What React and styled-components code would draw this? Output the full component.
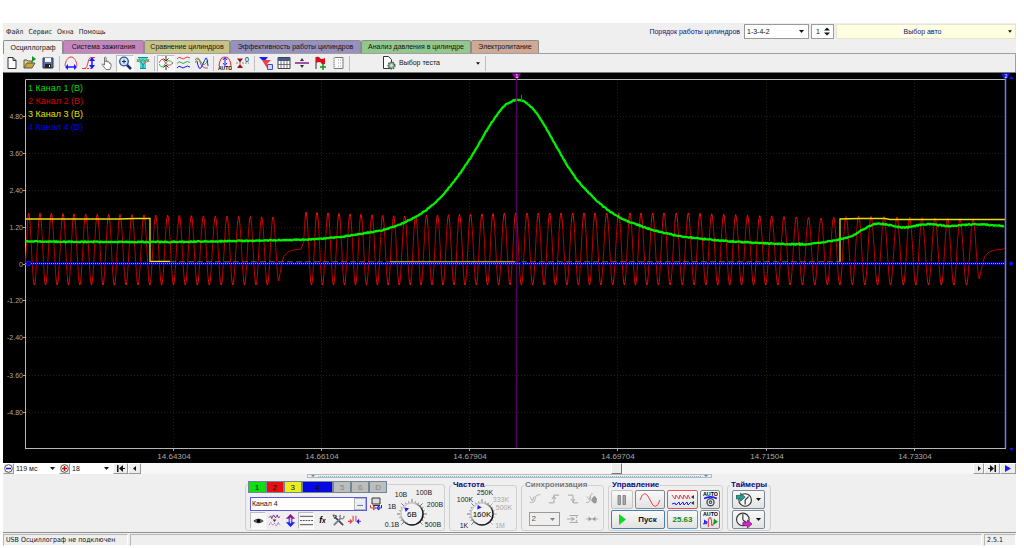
import React from "react";
import styled, { createGlobalStyle } from "styled-components";

const GlobalStyle = createGlobalStyle`
  *, *::before, *::after { box-sizing: border-box; }
  body {
    margin: 0;
    background: #fff;
    color: #111;
    font: 7px/10px "Liberation Sans", Arial, sans-serif;
  }
  button, input, select {
    font: inherit;
    color: inherit;
    margin: 0;
    border-radius: 0;
  }
  svg { display: block; flex: none; }
`;

const Page = styled.div`
  padding: 23px 8px 0 3px;
`;

const Window = styled.main`
  background: #efefef;
`;

/* ---------- menu line ---------- */

const MenuBar = styled.header`
  display: flex;
  align-items: center;
  height: 17px;
`;

const Menu = styled.nav`
  display: flex;
  gap: 5px;
  padding-left: 3px;
  margin-right: auto;
  font-family: "DejaVu Sans Condensed", "DejaVu Sans", sans-serif;
`;

const MenuLink = styled.a`
  color: #222;
  text-decoration: none;
`;

const OrderLabel = styled.label`
  color: #10107a;
  margin-right: 4px;
`;

const Combo = styled.span`
  display: grid;
  width: ${(p) => p.$w}px;
  height: ${(p) => p.$h || 15}px;
  margin-right: ${(p) => p.$gap || 0}px;
  align-items: center;
  background: ${(p) => (p.$off ? "#efefef" : "#fff")};
  border: ${(p) => (p.$flat ? "0" : "1px solid #9a9a9a")};
  color: ${(p) => (p.$off ? "#555" : "#111")};

  select, svg { grid-area: 1 / 1; }
  select {
    appearance: none;
    width: 100%;
    height: 100%;
    padding: 0 2px;
    border: 0;
    background: transparent;
  }
  svg {
    justify-self: end;
    margin-right: 4px;
    pointer-events: none;
    opacity: ${(p) => (p.$off ? 0.5 : 1)};
  }
`;

const Spinner = styled.span`
  display: flex;
  align-items: center;
  justify-content: space-between;
  width: 23px;
  height: 15px;
  margin-right: 2px;
  padding: 0 3px 0 4px;
  background: #fff;
  border: 1px solid #9a9a9a;

  input {
    width: 8px;
    padding: 0;
    border: 0;
    background: transparent;
  }
`;

const CarButton = styled.button`
  display: flex;
  align-items: center;
  width: 180px;
  height: 15px;
  padding: 0 3px 0 0;
  border: 1px solid #e6e6cf;
  background: #ffffe1;
  color: #10107a;

  span { flex: 1; }
`;

/* ---------- tabs and toolbar ---------- */

const Tabs = styled.div`
  display: flex;
  align-items: flex-end;
  height: 14px;
  border-bottom: 1px solid #a0a0a0;
`;

const Tab = styled.button`
  width: ${(p) => p.$w}px;
  height: ${(p) => (p.$active ? 14 : 13)}px;
  margin-bottom: ${(p) => (p.$active ? -1 : 0)}px;
  padding: 0;
  border: 1px solid #8c8c8c;
  border-bottom: 0;
  border-radius: 2px 2px 0 0;
  background: ${(p) => p.$bg};
  white-space: nowrap;
`;

const Toolbar = styled.div`
  display: flex;
  align-items: center;
  height: 18px;
  border-right: 1px solid #a0a0a0;
`;

const Tool = styled.button`
  display: grid;
  place-items: center;
  width: ${(p) => p.$w || 18}px;
  height: 17px;
  padding: 0;
  border: 1px solid;
  border-color: ${(p) => (p.$on ? "#bcbcbc #fff #fff #bcbcbc" : "transparent")};
  background: ${(p) => (p.$on ? "#f8f8f8" : "transparent")};
`;

const Divider = styled.i`
  width: 1px;
  height: 15px;
  margin: 0 2px;
  background: #bdbdbd;
`;

const TestButton = styled.button`
  display: flex;
  align-items: center;
  gap: 3px;
  width: 101px;
  height: 17px;
  margin-left: 30px;
  padding: 0 3px 0 0;
  border: 0;
  background: transparent;

  span { flex: 1; text-align: left; }
`;

/* ---------- scope ---------- */

const Scope = styled.svg`
  width: 100%;
  height: auto;
  background: #000;
  font-family: "Liberation Sans", Arial, sans-serif;
`;

const ScrollRow = styled.div`
  display: flex;
  align-items: center;
  height: 11px;
  background: #f7f7f7;
`;

const SmallButton = styled.button`
  display: grid;
  place-items: center;
  width: ${(p) => p.$w}px;
  height: 11px;
  padding: 0;
  border: 1px solid;
  border-color: #fff #999 #999 #fff;
  background: #ededed;
`;

const TimeSlider = styled.input`
  appearance: none;
  flex: 1;
  min-width: 0;
  height: 11px;
  background: #f7f7f7;

  &::-webkit-slider-thumb {
    appearance: none;
    width: 11px;
    height: 11px;
    border: 1px solid;
    border-color: #fff #777 #777 #fff;
    background: #ededed;
  }
`;

const Splitter = styled.div`
  display: flex;
  align-items: center;
  justify-content: space-between;
  width: 40%;
  height: 4px;
  margin: 0 auto;
  padding: 0 3px;
  border: 1px solid #b8b8b8;

  &::before, &::after {
    content: "";
    border: 2px solid transparent;
    border-top-color: #2f8fd8;
    border-bottom: 0;
  }
  span {
    flex: 1;
    margin: 0 3px;
    border-top: 1px dotted #7ab8e6;
  }
`;

/* ---------- control panel ---------- */

const Panel = styled.section`
  display: flex;
  justify-content: center;
  gap: 4px;
  height: 55px;
  padding: 3px 3px 0 0;
  border-bottom: 1px solid #8e8e8e;
`;

const Group = styled.fieldset`
  width: ${(p) => p.$w}px;
  height: 50px;
  min-width: 0;
  margin: 0;
  padding: 0 2px;
  border: 1px solid #cfcfcf;
  border-radius: 3px;

  legend {
    height: 8px;
    margin-left: 0;
    padding: 0 1px;
    color: ${(p) => (p.$off ? "#777" : "#0a0a80")};
    font-size: 8px;
    font-weight: bold;
    line-height: 8px;
    white-space: nowrap;
  }
`;

const ChannelGroup = styled.div`
  display: flex;
  width: 200px;
  height: 47px;
  margin-top: 3px;
  padding: 0 2px;
  border: 1px solid #cfcfcf;
  border-radius: 3px;
`;

const ChannelColumn = styled.div`
  width: 139px;
  margin-top: -4px;
`;

const ChannelButtons = styled.div`
  display: flex;
`;

const Channel = styled.button`
  width: ${(p) => (p.$on ? 32 : 18)}px;
  height: 12px;
  padding: 0;
  border: 1px solid #6f8797;
  background: ${(p) => p.$bg || "#bdbdbd"};
  color: ${(p) => (p.$bg ? "#111" : "#858585")};
  font-size: 8px;
  font-weight: ${(p) => (p.$on ? "bold" : "normal")};
  line-height: 9px;
`;

const NameRow = styled.div`
  display: flex;
  align-items: center;
  gap: 2px;
  margin: 4px 0 1px 2px;
`;

const NameBox = styled.span`
  display: flex;
  width: 117px;
  height: 14px;
  border: 1px solid #5b5be0;
  background: #fff;

  input {
    flex: 1;
    min-width: 0;
    padding: 0 1px;
    border: 0;
    background: transparent;
  }
  button {
    width: 12px;
    padding: 0;
    border: 1px solid #b5b5b5;
    background: #efefef;
    font-weight: bold;
    line-height: 6px;
  }
`;

const ChannelTools = styled.div`
  display: flex;
  margin-left: 2px;
`;

const SyncGrid = styled.div`
  display: grid;
  grid-template-columns: repeat(4, 19px);
  grid-template-rows: 20px;
  grid-auto-rows: 20px;
  place-items: center;
  padding-left: 1px;
`;

const SyncSource = styled.div`
  grid-column: span 2;
  font-size: 8px;
`;

const ControlGrid = styled.div`
  display: grid;
  grid-template-columns: ${(p) => p.$cols};
  gap: 1px 2px;
  margin: 1px 0 0 ${(p) => p.$left || 0}px;
`;

const Key = styled.button`
  display: flex;
  align-items: center;
  justify-content: center;
  gap: ${(p) => p.$gap || 0}px;
  grid-column: span ${(p) => p.$span || 1};
  height: 19px;
  padding: 0;
  border: 1px solid ${(p) => p.$line || "#7d8a94"};
  border-radius: 2px;
  background: linear-gradient(#f9f9f9, #e2e2e2);
  color: ${(p) => p.$color || "#111"};
  font-size: 8px;
  font-weight: bold;
`;

const StatusBar = styled.footer`
  display: flex;
  gap: 2px;
  padding-top: 1px;
  font-family: "DejaVu Sans Condensed", "DejaVu Sans", sans-serif;
`;

const StatusCell = styled.span`
  width: ${(p) => (p.$w ? `${p.$w}px` : "auto")};
  flex: ${(p) => (p.$w ? "none" : 1)};
  height: 12px;
  padding-left: 2px;
  border: 1px solid;
  border-color: #b5b5b5 #fff #fff #b5b5b5;
`;

/* ---------- drawings ---------- */

const Arrow = ({ size = 5 }) => (
  <svg width={size} height="3" viewBox="0 0 5 3">
    <path d="M0 0h5L2.5 3z" fill="#111" />
  </svg>
);

const UpDown = () => (
  <svg width="6" height="9" viewBox="0 0 6 9">
    <path d="M0 3.5L3 .5l3 3zM0 5.5h6l-3 3z" fill="#111" />
  </svg>
);

const R = "#e8404a";
const B = "#1a1aff";
const G = "#35b548";
const P = "#8a1a8a";

const shapes = {
  file: <path d="M3 1.500h5l3 3v8H3z M8 1.500v3h3" fill="#fff" stroke="#333" />,
  open: (
    <>
      <path d="M1 12V4h3l1 1h4v3" fill="#e8d26a" stroke="#555" />
      <path d="M1 12l3-5h8l-3 5z" fill="#c8a838" stroke="#555" />
      <path d="M9 0l4 3-4 3z" fill="#0c9a1c" />
    </>
  ),
  save: (
    <>
      <path d="M2 2h10v10H2z" fill="#5a6f9c" stroke="#273450" />
      <path d="M4 2h6v4H4z" fill="#f4f4f4" />
      <path d="M4 8h6v4H4z" fill="#222" />
      <path d="M8 9h1v2H8z" fill="#fff" />
    </>
  ),
  arcH: (
    <>
      <path d="M1 10C2 -2 12 -2 13 10" fill="none" stroke={R} />
      <path d="M3 11h8" stroke={B} strokeWidth="1.5" />
      <path d="M1 11l3-3v6zM13 11l-3-3v6z" fill={B} />
    </>
  ),
  arcV: (
    <>
      <path d="M0 12.500h2c5 0 3-11 7-11h4" fill="none" stroke={R} />
      <path d="M2 12.500h8" stroke={R} strokeDasharray="2 1" />
      <path d="M10 3v8" stroke={B} strokeWidth="1.5" />
      <path d="M10 1l3 4H7zM10 13l3-4H7z" fill={B} />
    </>
  ),
  hand: (
    <path
      d="M4.500 7V1.500q1-1 1.500 0V6V5q1-.8 1.700.2v1q1-.8 1.700.2v1q1.300-.6 1.600.6v2.500l-1 3H6L2 8.500q.5-1.500 2.500.5z"
      fill="#fff"
      stroke="#555"
      strokeWidth=".8"
    />
  ),
  zoom: (
    <>
      <path d="M9 9l4 4" stroke="#1c2e6a" strokeWidth="2.500" />
      <circle cx="6" cy="5.500" r="4.300" fill="#cfe6fa" stroke="#2c4c9c" strokeWidth="1.300" />
      <path d="M4 5.500h4M6 3.500v4" stroke="#1c2e6a" />
    </>
  ),
  region: (
    <>
      <path d="M2 1h10L10 6v7H4V6z" fill="#35dfe0" />
      <path d="M1 6q2-5 4 0t4 0 4 0" fill="none" stroke={R} />
      <path d="M1 3q2 5 4 2t4 0 4-2" fill="none" stroke={G} />
      <path d="M2 1.500h10M4 12.500h6M7 8v4" stroke="#1a8a8c" />
    </>
  ),
  cross: (
    <>
      <path d="M0 7q3-7 6-1t8 1" fill="none" stroke={R} />
      <path d="M0 8q3 6 6 0t8-1" fill="none" stroke={G} />
      <path d="M7 0v5M7 9v5M4.500 2.500L7 5l2.500-2.500M4.500 11.500L7 9l2.500 2.500" fill="none" stroke="#333" />
    </>
  ),
  waves: (
    <>
      <path d="M0 3q2-3 4-1t4 0 5 0" fill="none" stroke={R} />
      <path d="M0 7.500q2-3 4-1t4 0 5 0" fill="none" stroke={G} />
      <path d="M0 12q2-3 4-1t4 0 5 0" fill="none" stroke={B} />
    </>
  ),
  overlap: (
    <>
      <path d="M0 4q3-5 5 2t8 6" fill="none" stroke={R} />
      <path d="M0 7q3-7 6-1t7-2" fill="none" stroke={G} />
      <path d="M2 5q2 12 5 5t4-8 2 8" fill="none" stroke={B} />
    </>
  ),
  autoArc: (
    <>
      <path d="M1 10C2 -2 12 -2 13 10" fill="none" stroke={R} strokeWidth="1.200" />
      <path d="M7 2v6M5 4l2-2.500L9 4M5 7l2 2.500L9 7" fill="none" stroke={B} />
      <text x="7" y="14" fontSize="5" fontWeight="bold" textAnchor="middle">AUTO</text>
    </>
  ),
  zero: (
    <>
      <path d="M0 7h13" stroke="#888" strokeDasharray="2 1" />
      <path d="M4 6.500L1 2.500h6zM4 8l-3 4h6z" fill="#a01010" />
      <text x="11" y="6" fontSize="7" textAnchor="middle">0</text>
    </>
  ),
  filter: (
    <>
      <path d="M0 1h9L5 6z" fill={B} />
      <path d="M3 4h9L8 8v4L6 9z" fill={R} />
      <path d="M8.500 8.500h5v5h-5z" fill="#cfd4ff" stroke="#4450c0" />
    </>
  ),
  table: (
    <>
      <path d="M1 1.500h12v11H1z" fill="#fff" stroke="#444" />
      <path d="M1 2h12v3H1z" fill="#445a9c" />
      <path d="M4 2v11M7 2v11M10 2v11M1 8.500h12" stroke="#555" strokeWidth=".8" />
    </>
  ),
  split: (
    <>
      <path d="M0 7h14" stroke={P} strokeWidth="1.500" />
      <path d="M7 2l2 3H5zM7 12l2-3H5z" fill="#333" />
    </>
  ),
  flag: (
    <>
      <path d="M3 1v12" stroke="#333" />
      <path d="M3 1q3-1 4 1t5 0v6q-3 1-4-1t-5 0z" fill="#d8101c" />
      <path d="M10 8v6M7 11h6" stroke="#0a9a1c" strokeWidth="1.500" />
    </>
  ),
  notes: (
    <>
      <path d="M3 1.500h9v11H3z" fill="#fafafa" stroke="#777" />
      <path d="M3 1v12" stroke="#fafafa" strokeDasharray="1 1" />
      <path d="M7 4h3M7 7h3M7 10h3" stroke="#aaa" strokeDasharray="1 1" />
    </>
  ),
  test: (
    <>
      <path d="M1.500.5h5l3 3v9h-8z" fill="#fff" stroke="#333" />
      <circle cx="9.500" cy="9.500" r="3.300" fill="#8fa890" stroke="#45604a" strokeWidth="1.500" strokeDasharray="1.500 .8" />
      <circle cx="9.500" cy="9.500" r="1.200" fill="#e8efe8" />
    </>
  ),
  eye: (
    <>
      <path d="M2 7.500q5-4 10 0q-5 4-10 0z" fill="#777" stroke="#222" strokeWidth=".8" />
      <circle cx="7" cy="7.500" r="2" fill="#000" />
    </>
  ),
  noise: (
    <>
      <path d="M1 4l2-2 1 3 2-4 2 3 2-3 1 3 2-1" fill="none" stroke={P} />
      <path d="M5 6h4L7 8.500z" fill="#333" />
      <path d="M1 12l2-3 2 3 2-2 2 3 2-4 2 3" fill="none" stroke="#b050b0" strokeDasharray="2 1" />
    </>
  ),
  vertical: (
    <>
      <path d="M7 0L2 5h3v2h4V5h3z" fill={P} />
      <path d="M7 14L2 9h3V7h4v2h3z" fill={B} />
      <path d="M7 4v6" stroke="#dcd8ff" strokeWidth="1.500" />
    </>
  ),
  levels: (
    <>
      <path d="M0 2.500h14M0 11.500h14" stroke="#444" />
      <path d="M0 7h14" stroke="#444" strokeDasharray="2 1" />
    </>
  ),
  fx: (
    <text x="7" y="10" fontSize="9" fontWeight="bold" fontStyle="italic" textAnchor="middle">
      f<tspan fontSize="7">x</tspan>
    </text>
  ),
  tools: (
    <>
      <path d="M3 3l9 9" stroke="#444" strokeWidth="1.800" />
      <path d="M2 12l7-7" stroke="#6d7f90" strokeWidth="2" />
      <path d="M9 1q-2 3 1 4t3-3M1 1l4 1-2 3z" fill="none" stroke="#444" />
    </>
  ),
  pulse: (
    <>
      <path d="M0 8h4M14 8h-4M5.500 8V2M8.500 8V2" fill="none" stroke={R} strokeWidth="1.200" />
      <path d="M2 5l3 3-3 3z" fill={R} />
      <path d="M12 5L9 8l3 3z" fill={B} />
    </>
  ),
  reset: (
    <>
      <path d="M3 1h8v6H3z" fill="#ddd" stroke="#333" />
      <path d="M4 8.500h7" stroke="#333" />
      <path d="M6 11H1.500V8M7 11l-2.500-2v4z" fill="none" stroke={R} />
      <path d="M8 11h4.500V8M7.500 11l2.500-2v4z" fill="none" stroke={B} />
    </>
  ),
  syncA: <path d="M1 11h3q3 0 3-4t4-5h2M1 4l3 5 2-5" fill="none" stroke="#aaa" />,
  syncRise: <path d="M1 11.500h6v-9h6M4.500 7L7 4l2.500 3" fill="none" stroke="#999" />,
  syncFall: <path d="M1 2.500h6v9h6M4.500 7L7 10l2.500-3" fill="none" stroke="#999" />,
  syncHand: (
    <>
      <path d="M0 11q5 1 5-5t3-5M1 4l3 4 1-5" fill="none" stroke="#aaa" />
      <path d="M7 6l3-3 3 4-1 5H9L6 9z" fill="#999" />
    </>
  ),
  syncLevel: <path d="M3 3h10M3 11h10M0 7h9M5 5l3 2-3 2M11 4v2M11 10V8" fill="none" stroke="#999" />,
  syncZero: (
    <>
      <path d="M0 7h14" stroke="#aaa" />
      <path d="M6.500 7L3 4v6zM7.500 7L11 4v6z" fill="#999" />
    </>
  ),
  pause: <path d="M3 2.500h2.500v9H3zM8 2.500h2.500v9H8z" fill="#aaa" stroke="#777" strokeWidth=".8" />,
  autoGear: (
    <>
      <text x="7" y="4" fontSize="5" fontWeight="bold" textAnchor="middle">AUTO</text>
      <path d="M1 6q6-3 12 0" fill="none" stroke={B} strokeWidth="1.500" />
      <circle cx="7" cy="9.500" r="3.300" fill="#eee" stroke="#445" strokeWidth="1.200" />
      <circle cx="7" cy="9.500" r="1.200" fill="none" stroke="#445" />
    </>
  ),
  autoWave: (
    <>
      <text x="7" y="4" fontSize="5" fontWeight="bold" textAnchor="middle">AUTO</text>
      <path d="M0 11h3l1-2" fill="none" stroke={B} />
      <path d="M5 14V7q2-4 3 1v4q1 2 2-2" fill="none" stroke={R} />
      <path d="M1 7l3 2-3 2z" fill={B} />
      <path d="M10 6l4 3-4 3z" fill="#0aa01c" />
    </>
  ),
  timerIn: (
    <>
      <circle cx="8" cy="7" r="5.500" fill="#f6f6f6" stroke="#333" />
      <path d="M8 7l3-3M8 7v4" stroke="#333" />
      <path d="M0 3h4V1l4 3.500L4 8V6H0z" fill="#2a9a94" stroke="#14524e" strokeWidth=".6" />
    </>
  ),
  timerOut: (
    <>
      <circle cx="6" cy="6.500" r="5.500" fill="#f6f6f6" stroke="#333" />
      <path d="M6 7V2M6 7l3 2" stroke="#333" />
      <path d="M6 9h4V7l4 3.500L10 14v-2H6z" fill="#d828c8" stroke="#6c0a62" strokeWidth=".6" />
    </>
  ),
};

const Icon = ({ name, size = 14 }) => (
  <svg width={size} height={size} viewBox="0 0 14 14">
    {shapes[name]}
  </svg>
);

const Play = ({ d, fill = "#111" }) => (
  <svg width="8" height="7" viewBox="0 0 8 7">
    <path d={d} fill={fill} />
  </svg>
);

const Lens = ({ plus }) => (
  <svg width="9" height="9" viewBox="0 0 9 9">
    <circle cx="4.500" cy="4.500" r="3.800" fill="#fff" stroke="#555" />
    <path d={plus ? "M2 4.500h5M4.500 2v5" : "M2 4.500h5"} stroke={plus ? "#c01010" : "#1a1ab0"} strokeWidth="1.500" />
  </svg>
);

const Dial = styled.svg`
  overflow: visible;
`;

// dial with ticks from lower left round to lower right
function Knob({ w, h, cx, cy, value, labels, rim, dimTicks, pointer }) {
  const ticks = [];
  for (let a = 0; a <= 18; a++) {
    const t = ((-225 + a * 15) * Math.PI) / 180;
    const far = a % 3 === 0 ? 15 : 13;
    ticks.push(
      <line
        key={a}
        x1={cx + 11 * Math.cos(t)}
        y1={cy + 11 * Math.sin(t)}
        x2={cx + far * Math.cos(t)}
        y2={cy + far * Math.sin(t)}
        stroke={dimTicks && a > 11 ? "#aaa" : "#777"}
      />
    );
  }
  const pt = (pointer * Math.PI) / 180;
  return (
    <Dial width={w} height={h} viewBox={`0 0 ${w} ${h}`}>
      <defs>
        <linearGradient id={rim} x1="0" y1="0" x2="1" y2="1">
          <stop offset=".3" stopColor="#ccc" />
          <stop offset=".7" stopColor="#111" />
        </linearGradient>
      </defs>
      {ticks}
      <circle cx={cx} cy={cy} r="11" fill="#f2f2f2" stroke={`url(#${rim})`} strokeWidth="1.500" />
      <g transform={`translate(${cx + 8 * Math.cos(pt)} ${cy + 8 * Math.sin(pt)}) rotate(${pointer})`}>
        <path d="M2 0l-4-2.500v5z" fill={B} />
      </g>
      <text x={cx} y={cy + 3} fontSize="8" textAnchor="middle">{value}</text>
      {labels.map(([x, y, text, dim]) => (
        <text key={text} x={x} y={y} fontSize="7" textAnchor="middle" fill={dim ? "#aaa" : "#222"}>
          {text}
        </text>
      ))}
    </Dial>
  );
}

/* ---------- traces ---------- */

const red1 = [28.7, 40, 51.3, 63, 74, 85.7, 97.3, 108.7, 120, 132, 144, 155.7, 167.7, 179.3, 191.3, 203.3, 215.3, 227, 238.7, 250.3, 261.7, 273];
const red2 = [
  306, 317, 328, 339, 350, 361, 372, 382.7, 393.7, 404.7, 415.7, 426.5, 437.5, 448.5, 459.5, 470.5, 482, 493, 504.3, 515.7,
  527, 538.3, 549.7, 561, 572.7, 584, 595, 606.7, 618.7, 630, 641, 652.7, 664, 676.3, 688.3, 700, 711.7, 723.7, 735.7,
  747.5, 759.7, 771.7, 784, 796.3, 808.5, 821, 833.7, 846, 858.7, 871, 884, 897, 909.7, 922, 935, 947.7, 960, 973,
];
const envelope = [[25, 213], [273, 217], [306, 212], [400, 216], [510, 213], [690, 213], [821, 218], [860, 216], [1005, 220]];

const green = [
  [25, 241.5], [150, 242], [240, 241], [285, 240], [307, 239.5], [339, 237], [360, 234], [390, 228], [415.7, 216.7],
  [431.7, 205.5], [448.3, 188.7], [470, 158.7], [486.7, 130.5], [496.7, 115.5], [506.7, 104], [516.7, 100], [522.7, 101],
  [533.3, 109.3], [545, 126.3], [560, 153], [573.3, 174.7], [586.7, 190.5], [600, 203.7], [618.7, 217], [640, 225.7],
  [656.7, 231], [680, 236], [700, 238.7], [730, 241.3], [766.7, 243.3], [800, 244.3], [820, 242.7], [840, 239.3],
  [850, 236.7], [861.7, 230.3], [873.3, 224.5], [883, 224], [903, 227.5], [926.7, 224.3], [950, 226], [973, 224.3], [1005, 226],
];

function lerp(points, x) {
  let i = 0;
  while (i < points.length - 2 && points[i + 1][0] < x) i++;
  const [a, b] = [points[i], points[i + 1]];
  return a[1] + ((b[1] - a[1]) * (x - a[0])) / (b[0] - a[0]);
}

function swing(peaks, start, lastTrough) {
  const keys = [start];
  peaks.forEach((x, i) => {
    keys.push([x, lerp(envelope, x)]);
    if (i < peaks.length - 1) keys.push([(x + peaks[i + 1]) / 2, 285]);
  });
  keys.push(lastTrough);
  let d = "";
  for (let i = 0; i < keys.length - 1; i++) {
    const [x0, y0] = keys[i];
    const [x1, y1] = keys[i + 1];
    for (let s = 0; s < 8; s++) {
      const k = (1 - Math.cos((Math.PI * s) / 8)) / 2;
      d += `L${(x0 + ((x1 - x0) * s) / 8).toFixed(1)} ${(y0 + (y1 - y0) * k).toFixed(1)}`;
    }
  }
  return d + `L${lastTrough.join(" ")}`;
}

// repeatable pseudo noise in -0.5..0.5
function grain(x) {
  const v = Math.sin(x * 127.1) * 43758.5453;
  return v - Math.floor(v) - 0.5;
}

function smooth(points) {
  let d = "";
  for (let i = 0; i < points.length - 1; i++) {
    const p0 = points[Math.max(i - 1, 0)];
    const p1 = points[i];
    const p2 = points[i + 1];
    const p3 = points[Math.min(i + 2, points.length - 1)];
    const w = p2[0] - p1[0];
    const m1 = ((p2[1] - p0[1]) / (p2[0] - p0[0])) * w;
    const m2 = ((p3[1] - p1[1]) / (p3[0] - p1[0])) * w;
    for (let x = p1[0]; x < p2[0]; x += 1) {
      const t = (x - p1[0]) / w;
      const y =
        (2 * t ** 3 - 3 * t ** 2 + 1) * p1[1] +
        (t ** 3 - 2 * t ** 2 + t) * m1 +
        (3 * t ** 2 - 2 * t ** 3) * p2[1] +
        (t ** 3 - t ** 2) * m2;
      d += `${d ? "L" : "M"}${x.toFixed(1)} ${(y + grain(x)).toFixed(1)}`;
    }
  }
  return d;
}

const redPath =
  "M25 263" +
  swing(red1, [25, 263], [278.7, 281]) +
  "L282 262L284 256L288 252L293 250L301 249L303 244" +
  swing(red2, [303, 244], [979.3, 279]) +
  "L983 262L985 256L989 252L995 250L1002 249.500L1005 248";

const voltage = [
  [116, "4.80"], [153, "3.60"], [190, "2.40"], [227, "1.20"], [264, "0"],
  [300, "-1.20"], [337, "-2.40"], [375, "-3.60"], [412, "-4.80"],
];
const times = [
  [174, "14.64304"], [322, "14.66104"], [470, "14.67904"], [618, "14.69704"], [767, "14.71504"], [915, "14.73304"],
];
const legend = [
  ["1 Канал 1 (В)", "#00d800"],
  ["2 Канал 2 (В)", "#d80000"],
  ["3 Канал 3 (В)", "#e0e000"],
  ["4 Канал 4 (В)", "#0000e8"],
];

function ScopeView() {
  return (
    <Scope viewBox="3 72 1013 391" role="img" aria-label="Осциллограмма">
      <defs>
        <linearGradient id="redFade" gradientUnits="userSpaceOnUse" x1="0" y1="213" x2="0" y2="286">
          <stop offset="0" stopColor="#ff1010" />
          <stop offset=".2" stopColor="#b80000" />
          <stop offset=".85" stopColor="#b80000" />
          <stop offset="1" stopColor="#ff1010" />
        </linearGradient>
      </defs>
      <path d="M3 72.500H1016" stroke="#777" />
      <g stroke="#20200c" strokeDasharray="1 2">
        {voltage.map(([y]) => <path key={y} d={`M26 ${y + 0.5}H1005`} />)}
        {times.map(([x]) => <path key={x} d={`M${x - 0.5} 80V448`} />)}
      </g>
      <path d="M25.500 448V79.500H1005M25 448.500H1006" fill="none" stroke="#b8b8b8" />
      <g fill="#a8a8a8" stroke="none">
        {voltage.map(([y, t]) => (
          <React.Fragment key={t}>
            <text x="23" y={y + 3} fontSize="7" textAnchor="end">{t}</text>
            <path d={`M23 ${y}h2v1h-2z`} />
          </React.Fragment>
        ))}
        {times.map(([x, t]) => (
          <React.Fragment key={t}>
            <text x={x} y="459" fontSize="8" textAnchor="middle">{t}</text>
            <path d={`M${x - 1} 449h1v2h-1z`} />
          </React.Fragment>
        ))}
      </g>
      <path d={redPath} fill="none" stroke="url(#redFade)" strokeWidth="1" />
      <path d="M25 219H120L135 218.500H150V261.500H170M390 262H515M840 262V219L860 218.500H885L890 219.500H1005" fill="none" stroke="#e8e000" strokeWidth="1.300" />
      <path d="M170 262H840" stroke="#9c9430" strokeDasharray="6 3" />
      <path d="M25 263.500H1005" stroke="#0000f0" strokeWidth="2.500" />
      <path d="M25 263.500H1005" stroke="#a8b0ff" strokeDasharray="1 1" />
      <path d={smooth(green)} fill="none" stroke="#00f000" strokeWidth="2.300" />
      <path d="M521.500 95v7" stroke="#00a000" />
      <path d="M521.500 240v32" stroke="#0000b0" />
      <path d="M516.500 79V448" stroke="#64006c" strokeWidth="1.500" opacity=".8" />
      <path d="M512 73.500h9l-3 5h-3z" fill="#a000a8" />
      <path d="M1005.500 77V448" stroke="#7474f4" strokeWidth="1.500" />
      <path d="M1001 73.500h9l-3 5h-3z" fill="#1010ff" />
      <text x="517" y="78" fontSize="5" textAnchor="middle" fill="#fff">1</text>
      <text x="1006" y="78" fontSize="5" textAnchor="middle" fill="#fff">2</text>
      <path d="M1009 79l2-3 3 3zM1009 263.500l2-2.500 3 2.500-3 2.500zM1009 448h5l-2.500 3z" fill="#1010ff" />
      <circle cx="28.500" cy="263.500" r="2" fill="#000" stroke="#1010ff" strokeWidth="1.500" />
      {legend.map(([t, color], i) => (
        <text key={t} x="28" y={91 + i * 13} fontSize="9" fill={color}>{t}</text>
      ))}
    </Scope>
  );
}

const tabs = [
  ["Осциллограф", 60, "#efefef"],
  ["Система зажигания", 81, "#c487bd"],
  ["Сравнение цилиндров", 86, "#c6c284"],
  ["Эффективность работы цилиндров", 131, "#9791c0"],
  ["Анализ давления в цилиндре", 110, "#92c78e"],
  ["Электропитание", 68, "#cfa996"],
];

// "|" is a divider, a trailing "*" marks a pressed button
const tools = [
  ["file", "Новый"], ["open", "Открыть"], ["save", "Сохранить"], "|",
  ["arcH", "Ширина"], ["arcV", "Высота"], ["hand", "Сдвиг"], ["zoom*", "Лупа"], ["region", "Область"], "|",
  ["cross*", "Совместить"], ["waves", "Разделить"], ["overlap", "Наложить"], "|",
  ["autoArc", "Авто"], ["zero", "Ноль"], "|",
  ["filter", "Фильтр"], ["table", "Таблица"], ["split", "Линейка"], ["flag", "Метка"], ["notes", "Заметки"], "|",
];

const channels = [
  ["1", "#10e010"], ["2", "#e81010"], ["3", "#ecec20"], ["4", "#0808e0"], ["5"], ["6"], ["D"],
];

const voltLabels = [
  [5, 42, "0.1В"], [5, 24, "1В"], [14, 12, "10В"], [37, 10, "100В"], [48, 22, "200В"], [46, 42, "500В"],
];
const freqLabels = [
  [12, 39, "1K"], [13, 13, "100K"], [33, 6, "250K"], [49, 13, "333K", true], [52, 21, "500K", true], [48, 39, "1M", true],
];

export default function App() {
  return (
    <Page>
      <GlobalStyle />
      <Window>
        <MenuBar>
          <Menu>
            {["Файл", "Сервис", "Окна", "Помощь"].map((m) => (
              <MenuLink key={m} href="#">{m}</MenuLink>
            ))}
          </Menu>
          <OrderLabel htmlFor="order">Порядок работы цилиндров</OrderLabel>
          <Combo $w={65} $gap={2}>
            <select id="order"><option>1-3-4-2</option></select>
            <Arrow />
          </Combo>
          <Spinner>
            <input aria-label="Цилиндр" defaultValue="1" />
            <UpDown />
          </Spinner>
          <CarButton>
            <span>Выбор авто</span>
            <Arrow size={4} />
          </CarButton>
        </MenuBar>

        <Tabs role="tablist">
          {tabs.map(([name, w, bg], i) => (
            <Tab key={name} role="tab" $w={w} $bg={bg} $active={i === 0}>{name}</Tab>
          ))}
        </Tabs>

        <Toolbar>
          {tools.map((t, i) =>
            t === "|" ? (
              <Divider key={i} />
            ) : (
              <Tool key={t[0]} aria-label={t[1]} $on={t[0].endsWith("*")}>
                <Icon name={t[0].replace("*", "")} />
              </Tool>
            )
          )}
          <TestButton>
            <Icon name="test" />
            <span>Выбор теста</span>
            <Arrow size={4} />
          </TestButton>
          <Divider />
        </Toolbar>

        <ScopeView />

        <ScrollRow>
          <SmallButton $w={11} aria-label="Уменьшить"><Lens /></SmallButton>
          <Combo $w={45} $h={11} $flat>
            <select aria-label="Длительность"><option>119 мс</option></select>
            <Arrow />
          </Combo>
          <SmallButton $w={11} aria-label="Увеличить"><Lens plus /></SmallButton>
          <Combo $w={43} $h={11} $flat>
            <select aria-label="Масштаб"><option>18</option></select>
            <Arrow />
          </Combo>
          <SmallButton $w={15} aria-label="В начало"><Play d="M0 0h1.500v7H0zM6 0v7L2 3.500zM6 3h2v1H6z" /></SmallButton>
          <SmallButton $w={13} aria-label="Назад"><Play d="M5 1v5L2 3.500z" /></SmallButton>
          <TimeSlider type="range" aria-label="Время" min="0" max="1000" defaultValue="573" />
          <SmallButton $w={11} aria-label="Вперёд"><Play d="M3 1v5l3-2.500z" /></SmallButton>
          <SmallButton $w={16} aria-label="В конец"><Play d="M6.500 0H8v7H6.500zM2 0v7l4-3.500zM0 3h2v1H0z" /></SmallButton>
          <SmallButton $w={16} aria-label="Следить"><Play d="M1 0v7l6-3.500z" fill={B} /></SmallButton>
        </ScrollRow>

        <Splitter><span /></Splitter>

        <Panel>
          <ChannelGroup>
            <ChannelColumn>
              <ChannelButtons>
                {channels.map(([n, bg]) => (
                  <Channel key={n} $bg={bg} $on={n === "4"}>{n}</Channel>
                ))}
              </ChannelButtons>
              <NameRow>
                <NameBox>
                  <input aria-label="Имя канала" defaultValue="Канал 4" />
                  <button aria-label="Имя">...</button>
                </NameBox>
                <Icon name="reset" />
              </NameRow>
              <ChannelTools>
                {["eye*", "noise", "vertical", "levels*", "fx", "tools", "pulse"].map((n) => (
                  <Tool key={n} aria-label={n} $w={16} $on={n.endsWith("*")}>
                    <Icon name={n.replace("*", "")} size={13} />
                  </Tool>
                ))}
              </ChannelTools>
            </ChannelColumn>
            <Knob w={55} h={45} cx={25} cy={29} value="6В" labels={voltLabels} rim="rimVolt" pointer={-140} />
          </ChannelGroup>

          <Group $w={68}>
            <legend>Частота</legend>
            <Knob w={62} h={41} cx={30} cy={25} value="160K" labels={freqLabels} rim="rimFreq" dimTicks pointer={-115} />
          </Group>

          <Group $w={83} $off>
            <legend>Синхронизация</legend>
            <SyncGrid>
              <Icon name="syncA" size={12} />
              <Icon name="syncRise" size={12} />
              <Icon name="syncFall" size={12} />
              <Icon name="syncHand" size={12} />
              <SyncSource>
                <Combo $w={31} $h={14} $off>
                  <select aria-label="Источник"><option>2</option></select>
                  <Arrow />
                </Combo>
              </SyncSource>
              <Icon name="syncLevel" size={12} />
              <Icon name="syncZero" size={12} />
            </SyncGrid>
          </Group>

          <Group $w={115}>
            <legend>Управление</legend>
            <ControlGrid $cols="22px 30px 31px 20px">
              <Key aria-label="Пауза" $line="#c4c4c4"><Icon name="pause" /></Key>
              <Key aria-label="Синус">
                <svg width="22" height="14" viewBox="0 0 22 14">
                  <path d="M1 7Q5.500 -6 11 7T21 7" fill="none" stroke={R} />
                </svg>
              </Key>
              <Key aria-label="Сигналы" $line="#f05050">
                <svg width="24" height="14" viewBox="0 0 24 14">
                  <path d="M1 2l3 4 1-4 3 4 1-4 3 4 1-4 3 4 1-4 2 4" fill="none" stroke={R} />
                  <path d="M1 11l3-1 1 2 3-3 1 3 3-3 1 3 3-3 1 3 3-3" fill="none" stroke={B} />
                  <path d="M20 4l3-2v4zM20 10l3-2v4z" fill="#334" />
                </svg>
              </Key>
              <Key aria-label="Автонастройка"><Icon name="autoGear" size={15} /></Key>
              <Key $span={2} $gap={12} $line="#4c7ea8">
                <svg width="7" height="11" viewBox="0 0 7 11">
                  <path d="M0 0l7 5.500L0 11z" fill="#10d820" />
                </svg>
                Пуск
              </Key>
              <Key $line="#5a9ad0" $color="#118a11">25.63</Key>
              <Key aria-label="Автозапуск"><Icon name="autoWave" size={15} /></Key>
            </ControlGrid>
          </Group>

          <Group $w={44}>
            <legend>Таймеры</legend>
            <ControlGrid $cols="33px" $left={2}>
              <Key aria-label="Таймер запуска" $gap={4}><Icon name="timerIn" size={16} /><Arrow /></Key>
              <Key aria-label="Таймер остановки" $gap={4}><Icon name="timerOut" size={16} /><Arrow /></Key>
            </ControlGrid>
          </Group>
        </Panel>

        <StatusBar>
          <StatusCell $w={125}>USB Осциллограф не подключен</StatusCell>
          <StatusCell />
          <StatusCell $w={32}>2.5.1</StatusCell>
        </StatusBar>
      </Window>
    </Page>
  );
}
